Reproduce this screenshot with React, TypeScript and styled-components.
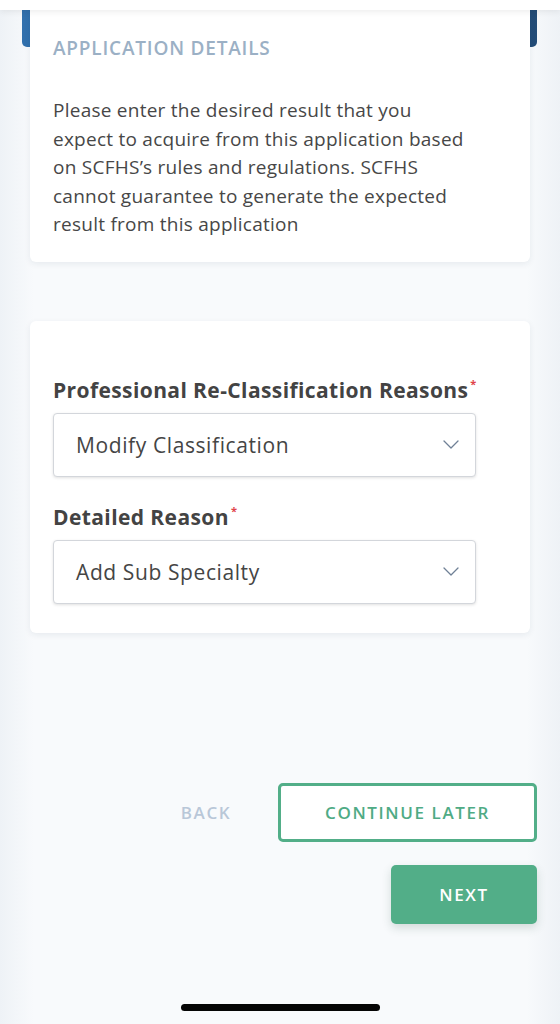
import React from 'react';
import styled, { createGlobalStyle } from 'styled-components';

const GlobalStyle = createGlobalStyle`
  html, body {
    margin: 0;
    padding: 0;
    background: #f7f9fc;
  }
  body {
    font-family: "Open Sans", "Liberation Sans", sans-serif;
    color: #404040;
  }
  * {
    box-sizing: border-box;
  }
`

const TopBar = styled.div`
  position: relative;
  z-index: 3;
  height: 10px;
  background: #ffffff;
  box-shadow: 0 2px 6px rgba(0, 0, 0, 0.07);
`

const Page = styled.main`
  isolation: isolate;
  min-height: 1014px;
  display: flex;
  flex-direction: column;
  padding: 0 30px;
  background: linear-gradient(to right, #eef2f6 0%, #f8fafc 6%, #f8fafc 94%, #eef2f6 100%);
`

const DetailsCard = styled.section`
  position: relative;
  background: #ffffff;
  border-radius: 0 0 6px 6px;
  box-shadow: 0 2px 6px rgba(30, 50, 80, 0.08);
  padding: 27px 23px 23px;

  &:before {
    content: '';
    position: absolute;
    z-index: -1;
    top: 0;
    left: -8px;
    right: -7px;
    height: 37px;
    border-radius: 0 0 5px 5px;
    background: linear-gradient(to right, #3170ad, #2a5f92 60%, #234c77);
  }
`

const CardTitle = styled.h2`
  margin: 0;
  font-size: 19px;
  line-height: 22px;
  font-weight: 600;
  color: #9bb0c5;
  letter-spacing: 0.8px;
`

const Intro = styled.p`
  margin: 37px 0 0;
  max-width: 416px;
  font-size: 19px;
  line-height: 28.5px;
  color: #474747;
  letter-spacing: 0.25px;
`

const FormCard = styled.section`
  margin-top: 59px;
  background: #ffffff;
  border-radius: 6px;
  box-shadow: 0 2px 6px rgba(30, 50, 80, 0.08);
  padding: 51px 23px 29px;
`

const Field = styled.div`
  & + & {
    margin-top: 22px;
  }
`

const Label = styled.label`
  display: block;
  font-size: 21px;
  line-height: 24px;
  font-weight: 700;
  color: #434343;
  letter-spacing: 0.4px;
`

const Required = styled.sup`
  color: #e0434a;
  font-size: 11px;
  margin-left: 2px;
  vertical-align: 10px;
`

const SelectBox = styled.div`
  margin-top: 11px;
  width: 423px;
  height: 64px;
  display: flex;
  align-items: center;
  justify-content: space-between;
  padding: 0 16px 0 22px;
  border: 1px solid #d3d6db;
  border-radius: 4px;
  background: #ffffff;
  box-shadow: 0 1px 3px rgba(0, 0, 0, 0.12);
  font-size: 21px;
  letter-spacing: 0.6px;
  color: #454545;
`

const Actions = styled.div`
  margin: 150px -7px 0 0;
  display: flex;
  flex-direction: column;
  align-items: flex-end;
  gap: 23px;
`

const ActionRow = styled.div`
  display: flex;
  align-items: center;
  gap: 22px;
`

const BaseButton = styled.button`
  height: 59px;
  border-radius: 5px;
  font-family: "Open Sans", "Liberation Sans", sans-serif;
  font-size: 17px;
  font-weight: 600;
  letter-spacing: 1.6px;
  text-transform: uppercase;
  cursor: pointer;
`

const GhostButton = styled(BaseButton)`
  width: 100px;
  border: none;
  background: transparent;
  color: #b9c7d8;
`

const OutlineButton = styled(BaseButton)`
  width: 259px;
  border: 3px solid #52ae88;
  background: #ffffff;
  color: #4fab85;
`

const PrimaryButton = styled(BaseButton)`
  width: 146px;
  border: none;
  background: #52ae88;
  color: #ffffff;
  box-shadow: 0 4px 10px rgba(40, 80, 60, 0.18);
`

const HomeIndicator = styled.div`
  margin: 80px auto 13px;
  width: 199px;
  height: 7px;
  border-radius: 4px;
  background: #050505;
`

const Chevron = () => (
  <svg width="16" height="9" viewBox="0 0 16 9" fill="none">
    <polyline points="1,1 8,8 15,1" stroke="#6f8096" strokeWidth="1.3" strokeLinecap="round" strokeLinejoin="round" />
  </svg>
)

interface SelectProps {
  label: string;
  value: string;
}

const SelectField: React.FC<SelectProps> = ({ label, value }) => (
  <Field>
    <Label>
      {label}
      <Required>*</Required>
    </Label>
    <SelectBox>
      <span>{value}</span>
      <Chevron />
    </SelectBox>
  </Field>
)

const App = () => (
  <>
    <GlobalStyle />
    <TopBar />
    <Page>
      <DetailsCard>
        <CardTitle>APPLICATION DETAILS</CardTitle>
        <Intro>
          Please enter the desired result that you expect to acquire from this application based on
          SCFHS’s rules and regulations. SCFHS cannot guarantee to generate the expected result from
          this application
        </Intro>
      </DetailsCard>
      <FormCard>
        <SelectField label="Professional Re-Classification Reasons" value="Modify Classification" />
        <SelectField label="Detailed Reason" value="Add Sub Specialty" />
      </FormCard>
      <Actions>
        <ActionRow>
          <GhostButton>Back</GhostButton>
          <OutlineButton>Continue Later</OutlineButton>
        </ActionRow>
        <PrimaryButton>Next</PrimaryButton>
      </Actions>
      <HomeIndicator />
    </Page>
  </>
)

export default App
